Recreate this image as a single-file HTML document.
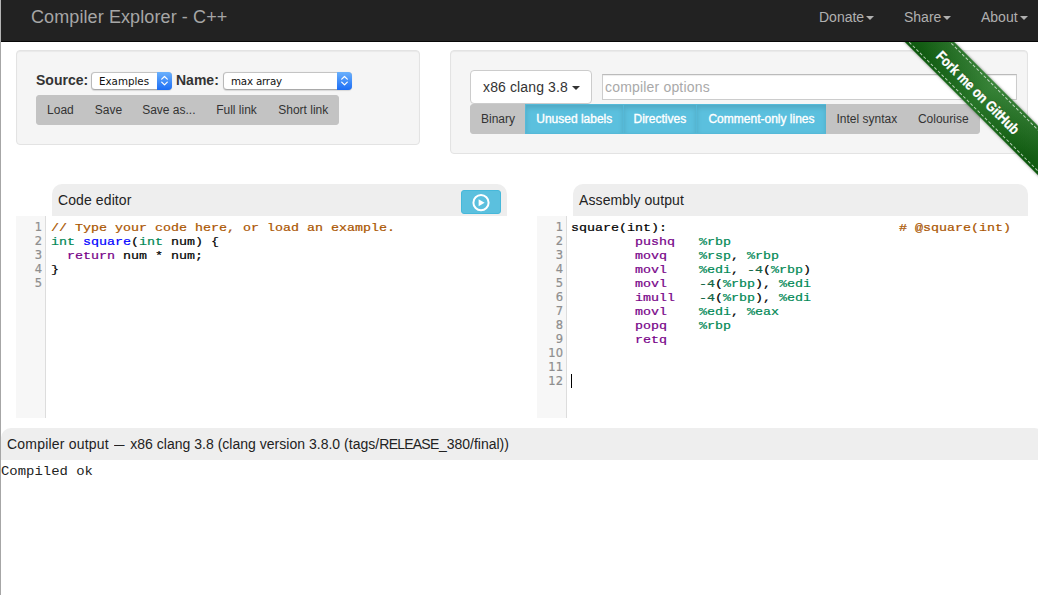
<!DOCTYPE html>
<html lang="en">
<head>
<meta charset="utf-8">
<title>Compiler Explorer - C++</title>
<style>
*{box-sizing:border-box}
html,body{margin:0;padding:0}
body{width:1038px;height:595px;overflow:hidden;position:relative;background:#fff;font-family:"Liberation Sans",Arial,sans-serif;font-size:14px;color:#333}
.abs{position:absolute}
#edge{left:0;top:0;width:1px;height:595px;background:#a6a6a6}
#nav{left:0;top:0;width:1038px;height:42px;background:#222;border-bottom:1px solid #080808}
#edge2{left:0;top:0;width:1px;height:42px;background:#b4b4b4}
#brand{left:31px;top:7px;letter-spacing:.1px;font-size:18px;line-height:20px;color:#a6a6a6;white-space:nowrap}
.navi{top:7px;font-size:14px;line-height:20px;color:#b0b0b0;white-space:nowrap}
.caret{display:inline-block;width:0;height:0;margin-left:2px;vertical-align:middle;border-top:4px solid;border-right:4px solid transparent;border-left:4px solid transparent}
.well{background:#f5f5f5;border:1px solid #e3e3e3;border-radius:4px;box-shadow:inset 0 1px 1px rgba(0,0,0,.05)}
.lbl{font-weight:bold;font-size:14px;line-height:20px;color:#333;white-space:nowrap}
.sel{height:18px;border-radius:4px;background:#fff;border:1px solid #b9b9b9;border-top-color:#c4c4c4;border-bottom-color:#a9a9a9;font-family:"DejaVu Sans","Liberation Sans",sans-serif;font-size:10.3px;line-height:16px;color:#111;padding-left:7px;white-space:nowrap;box-shadow:0 .5px 1px rgba(0,0,0,.12)}
.sel i{position:absolute;right:-1px;top:-1px;width:15px;height:18px;border-radius:0 4px 4px 0;background:linear-gradient(#6bb1fc,#1c6df5)}
.sel i svg{position:absolute;left:0;top:0}
.bg{display:flex;height:30px}
.btn{height:30px;padding:5px 0;text-align:center;flex:none;font-size:12px;line-height:18px;border:1px solid #c3c3c3;background:#c3c3c3;color:#333;white-space:nowrap;margin-left:-1px}
.btn:first-child{margin-left:0;border-radius:3px 0 0 3px}
.btn:last-child{border-radius:0 3px 3px 0}
.btn.on{background:#5bc0de;border-color:#55b9d8;color:#fff;-webkit-text-stroke:.35px #fff;box-shadow:inset 0 3px 5px rgba(0,0,0,.125)}
.hdr{background:#eee;height:32px;border-radius:10px 10px 0 0;font-size:14px;line-height:20px;color:#222;white-space:nowrap}
.hdr span{position:absolute;left:6px;top:6px}
.gut{background:#f7f7f7;border-right:1px solid #ddd;width:30px;font-family:"DejaVu Sans","Liberation Sans",sans-serif;font-size:11.5px;line-height:14px;color:#8e8e8e;text-align:right;padding:4px 3px 0 0;-webkit-text-stroke:.2px}
.code{font-family:"Liberation Mono","Courier New",monospace;font-size:11px;line-height:14px;color:#000;white-space:pre;margin:0;-webkit-text-stroke:.2px;transform:scaleX(1.2121);transform-origin:0 0}
.c{color:#a50}.k{color:#708}.t{color:#085}.d{color:#00f}.n{color:#164}
</style>
</head>
<body>
<div class="abs" id="nav"></div>
<div class="abs" id="brand">Compiler Explorer - C++</div>
<div class="abs navi" style="left:819px">Donate<span class="caret"></span></div>
<div class="abs navi" style="left:904px">Share<span class="caret"></span></div>
<div class="abs navi" style="left:981px">About<span class="caret"></span></div>

<!-- left well -->
<div class="abs well" style="left:16px;top:50px;width:404px;height:95px"></div>
<div class="abs lbl" style="left:36px;top:70px">Source:</div>
<div class="abs sel" style="left:91px;top:72px;width:81px">Examples<i><svg width="15" height="18" viewBox="0 0 15 18"><path d="M4.7 7.1 L7.5 4.5 L10.3 7.1 M4.7 10.1 L7.5 12.9 L10.3 10.1" fill="none" stroke="#fff" stroke-width="1.25" stroke-linecap="round" stroke-linejoin="round"/></svg></i></div>
<div class="abs lbl" style="left:176px;top:70px">Name:</div>
<div class="abs sel" style="left:223px;top:72px;width:129px;letter-spacing:-.2px">max array<i><svg width="15" height="18" viewBox="0 0 15 18"><path d="M4.7 7.1 L7.5 4.5 L10.3 7.1 M4.7 10.1 L7.5 12.9 L10.3 10.1" fill="none" stroke="#fff" stroke-width="1.25" stroke-linecap="round" stroke-linejoin="round"/></svg></i></div>
<div class="abs bg" style="left:36px;top:95px">
  <div class="btn" style="width:48.8px">Load</div><div class="btn" style="width:49.4px">Save</div><div class="btn" style="width:73.3px">Save as...</div><div class="btn" style="width:64.1px">Full link</div><div class="btn" style="width:71.3px">Short link</div>
</div>

<!-- right well -->
<div class="abs well" style="left:450px;top:50px;width:578px;height:104px"></div>
<div class="abs" style="left:470px;top:70px;width:122px;height:34px;background:#fff;border:1px solid #ccc;border-radius:4px;padding:6px 12px;font-size:14px;line-height:20px;color:#333;white-space:nowrap;letter-spacing:.13px">x86 clang 3.8 <span class="caret" style="margin-left:0"></span></div>
<div class="abs" style="left:602px;top:74px;width:415px;height:26px;background:#fff;border:1px solid #ccc;border-top-color:#bbb;box-shadow:inset 0 1px 1px rgba(0,0,0,.075);padding:2px 2px;font-size:14px;line-height:20px;color:#a9a9a9;white-space:nowrap;letter-spacing:.18px">compiler options</div>
<div class="abs bg" style="left:470px;top:104px">
  <div class="btn" style="width:56px">Binary</div><div class="btn on" style="width:98.5px">Unused labels</div><div class="btn on" style="width:74.7px">Directives</div><div class="btn on" style="width:130.6px">Comment-only lines</div><div class="btn" style="width:82.2px">Intel syntax</div><div class="btn" style="width:72.6px">Colourise</div>
</div>

<!-- code editor -->
<div class="abs hdr" style="left:52px;top:184px;width:455px"><span style="letter-spacing:.1px">Code editor</span></div>
<div class="abs" style="left:461px;top:190px;width:40px;height:24px;background:#5bc0de;border:1px solid #46b8da;border-radius:3px">
<svg width="38" height="22" viewBox="0 0 38 22" style="position:absolute;left:0;top:0"><circle cx="19" cy="11.7" r="7.6" fill="none" stroke="#fff" stroke-width="2"/><path d="M16.6 8.2 L22.6 11.7 L16.6 15.2 Z" fill="#fff"/></svg>
</div>
<div class="abs gut" style="left:16px;top:216px;height:202px">1<br>2<br>3<br>4<br>5</div>
<pre class="abs code" style="left:51px;top:221px"><span class="c">// Type your code here, or load an example.</span>
<span class="t">int</span> <span class="d">square</span>(<span class="t">int</span> num) {
  <span class="k">return</span> num * num;
}
</pre>

<!-- assembly -->
<div class="abs hdr" style="left:573px;top:184px;width:455px"><span style="letter-spacing:.1px">Assembly output</span></div>
<div class="abs gut" style="left:537px;top:216px;height:202px">1<br>2<br>3<br>4<br>5<br>6<br>7<br>8<br>9<br>10<br>11<br>12</div>
<pre class="abs code" style="left:571px;top:221px">square(int):                             <span class="c"># @square(int)</span>
        <span class="k">pushq</span>   <span class="t">%rbp</span>
        <span class="k">movq</span>    <span class="t">%rsp</span>, <span class="t">%rbp</span>
        <span class="k">movl</span>    <span class="t">%edi</span>, <span class="n">-4</span>(<span class="t">%rbp</span>)
        <span class="k">movl</span>    <span class="n">-4</span>(<span class="t">%rbp</span>), <span class="t">%edi</span>
        <span class="k">imull</span>   <span class="n">-4</span>(<span class="t">%rbp</span>), <span class="t">%edi</span>
        <span class="k">movl</span>    <span class="t">%edi</span>, <span class="t">%eax</span>
        <span class="k">popq</span>    <span class="t">%rbp</span>
        <span class="k">retq</span>
</pre>
<div class="abs" style="left:571px;top:374px;width:1px;height:14px;background:#000"></div>

<!-- compiler output -->
<div class="abs hdr" style="left:1px;top:428px;width:1043px;border-radius:10px 10px 0 0"><span style="left:6px;letter-spacing:.2px">Compiler output</span><span style="left:113px;transform:scaleX(.75);transform-origin:0 0">—</span><span style="left:129.3px;letter-spacing:.015px">x86 clang 3.8 (clang version 3.8.0 (tags/</span><span style="left:378.3px;letter-spacing:-.77px">RELEASE</span><span style="left:437.9px">_380/final))</span></div>
<pre class="abs code" style="left:1px;top:463px;font-size:12px;line-height:18px;color:#222;-webkit-text-stroke:0;transform:scaleX(1.161)">Compiled ok</pre>

<!-- ribbon -->
<div class="abs" style="left:889px;top:42px;width:149px;height:149px;overflow:hidden">
  <div id="rib" style="position:absolute;left:-29.9px;top:32.4px;width:240px;height:35px;transform:rotate(45deg);transform-origin:50% 50%;background:linear-gradient(180deg,rgba(255,255,255,.10),rgba(0,0,0,.06)),linear-gradient(90deg,#0d5c0d 20%,#257825 52%,#0d5c0d 85%);box-shadow:0 0 3px rgba(0,0,0,.45)">
    <svg width="240" height="35" viewBox="0 0 240 35" style="position:absolute;left:0;top:0"><path d="M0 3H240M0 32H240" stroke="#fff" stroke-opacity=".68" stroke-width="1" stroke-dasharray="3.1 2" fill="none"/></svg>
    <div id="ribt" style="position:absolute;left:0;right:0;top:2px;height:35px;line-height:35px;text-align:center;color:#fff;font-family:'Liberation Sans',sans-serif;font-weight:bold;font-size:14.5px;transform:scaleX(.85);-webkit-text-stroke:.3px #fff;text-shadow:0 -1px rgba(0,0,0,.3)">Fork me on GitHub</div>
  </div>
</div>
<div class="abs" id="edge"></div>
<div class="abs" id="edge2"></div>
</body>
</html>
